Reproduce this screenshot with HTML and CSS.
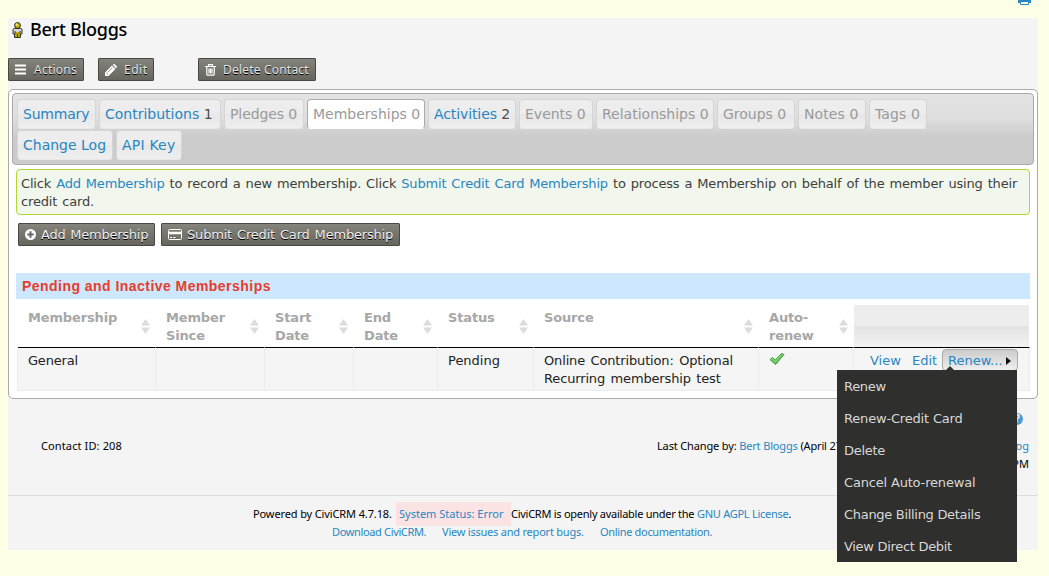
FILE: index.html
```html
<!DOCTYPE html>
<html lang="en">
<head>
<meta charset="utf-8">
<title>Bert Bloggs</title>
<link rel="stylesheet" href="styles.css">
</head>
<body>
<svg class="print" viewBox="0 0 13 12" width="13" height="12"><path d="M1 3h11a1 1 0 0 1 1 1v6H0V4a1 1 0 0 1 1-1z" fill="#2786c2"/><path d="M2.500 8.500h8v3h-8z" fill="#ffffe8" stroke="#2786c2"/></svg>
<main class="page">
  <h1 class="title">
    <svg width="11" height="16" viewBox="0 0 11 16"><circle cx="5.500" cy="3.500" r="2.900" fill="#c8b900" stroke="#222" /><path d="M2.500 6.500h6q1.500 0 1.500 1.500v4H8.500v3.500h-6V12H1V8q0-1.500 1.500-1.500z" fill="#d8d8d8" stroke="#333"/><path d="M3 10h5v5H3z" fill="#b8a900"/><path d="M3 9v3M8 9v3M5.500 12v3.500" stroke="#333"/><circle cx="4.700" cy="2.600" r="1" fill="#fff799"/></svg>
    <span>Bert Bloggs</span>
  </h1>
  <div class="actions">
    <a class="btn b-actions"><svg width="12" height="11" viewBox="0 0 12 11"><path d="M0 1.500h11M0 5.500h11M0 9.500h11" stroke="#fff" stroke-width="2"/></svg><span>Actions</span></a>
    <a class="btn b-edit"><svg width="12" height="12" viewBox="0 0 12 12"><path d="M0 12V8.500L7 1.500 10.500 5 3.500 12zM7.700.8l.8-.6q.6-.4 1.200 0l2.100 2.100q.4.600 0 1.200l-.7.700z" fill="#fff"/><path d="M2.500 8.500l5-5M1.200 9l1.800 1.800" stroke="#777" stroke-width=".7"/></svg><span>Edit</span></a>
    <a class="btn b-delete"><svg width="11" height="12" viewBox="0 0 11 12"><path d="M0 2.500h11M3.500 2V.7h4V2M1.800 3v7.200q0 1 1 1h5.400q1 0 1-1V3M4 4.500v5M5.500 4.500v5M7 4.500v5" fill="none" stroke="#fff" stroke-width="1.200"/></svg><span>Delete Contact</span></a>
  </div>
  <section class="panel">
    <nav class="tabs">
      <a class="tab t1">Summary</a>
      <a class="tab t2">Contributions <em>1</em></a>
      <a class="tab t3 off">Pledges 0</a>
      <a class="tab t4 off active">Memberships 0</a>
      <a class="tab t5">Activities <em>2</em></a>
      <a class="tab t6 off">Events 0</a>
      <a class="tab t7 off">Relationships 0</a>
      <a class="tab t8 off">Groups 0</a>
      <a class="tab t9 off">Notes 0</a>
      <a class="tab t10 off">Tags 0</a>
      <a class="tab t11">Change Log</a>
      <a class="tab t12">API Key</a>
    </nav>
    <p class="help">Click <a>Add Membership</a> to record a new membership. Click <a>Submit Credit Card Membership</a> to process a Membership on behalf of the member using their<br>credit card.</p>
    <div class="record">
      <a class="btn b-add"><svg width="11" height="11" viewBox="0 0 11 11"><circle cx="5.500" cy="5.500" r="5.500" fill="#fff"/><path d="M5.500 2.300v6.400M2.300 5.500h6.400" stroke="#666" stroke-width="2"/></svg><span>Add Membership</span></a>
      <a class="btn b-card"><svg width="14" height="11" viewBox="0 0 14 11"><rect x=".5" y=".5" width="13" height="10" rx="1" fill="none" stroke="#fff"/><path d="M0 4h14" stroke="#fff" stroke-width="2.500"/><path d="M2 8.500h2M5 8.500h2.500" stroke="#fff"/></svg><span>Submit Credit Card Membership</span></a>
    </div>
    <h2 class="section">Pending and Inactive Memberships</h2>
    <table class="grid">
      <colgroup><col class="c1"><col class="c2"><col class="c3"><col class="c4"><col class="c5"><col class="c6"><col class="c7"><col class="c8"></colgroup>
      <thead><tr>
        <th><div><span>Membership</span><i></i></div></th>
        <th><div><span>Member<br>Since</span><i></i></div></th>
        <th><div><span>Start<br>Date</span><i></i></div></th>
        <th><div><span>End<br>Date</span><i></i></div></th>
        <th><div><span>Status</span><i></i></div></th>
        <th><div><span>Source</span><i></i></div></th>
        <th><div><span>Auto-<br>renew</span><i></i></div></th>
        <th class="blank"></th>
      </tr></thead>
      <tbody><tr>
        <td class="tight">General</td><td></td><td></td><td></td><td>Pending</td>
        <td class="source">Online Contribution: Optional<br>Recurring membership test</td>
        <td><svg class="check" width="16" height="14" viewBox="0 0 16 14"><path d="M1 7.500l2.500-2 2.700 2.700L12.500 1.500l2.500 1-8.500 10z" fill="#5fc854" stroke="#419a3b" stroke-linejoin="round"/><path d="M2.500 7.500l1-.7 2.700 2.900 6.700-7" fill="none" stroke="#9be391"/></svg></td>
        <td class="ops"><div><a class="view">View</a><a class="edit">Edit</a><a class="more"><span>Renew...</span><b></b></a>
          <ul class="menu"><li>Renew</li><li>Renew-Credit Card</li><li>Delete</li><li>Cancel Auto-renewal</li><li>Change Billing Details</li><li>View Direct Debit</li></ul></div></td>
      </tr></tbody>
    </table>
  </section>
  <div class="meta">
    <span class="help-icon">?</span>
    <span class="cid">Contact ID: 208</span>
    <div class="change">
      <div class="line"><span>Last Change by: <a>Bert Bloggs</a> (April 27,</span><a>Change Log</a></div>
      <div class="line end">12:00 PM</div>
    </div>
  </div>
  <footer class="footer">
    <div class="powered"><span class="version">Powered by CiviCRM 4.7.18.</span><a class="status">System Status: Error</a><span class="license">CiviCRM is openly available under the <a>GNU AGPL License</a>.</span></div>
    <div class="links"><a class="download">Download CiviCRM.</a><a class="issues">View issues and report bugs.</a><a class="docs">Online documentation.</a></div>
  </footer>
</main>
</body>
</html>
```
FILE: styles.css
```css
* { box-sizing: border-box; }
body { margin: 0; height: 576px; overflow: hidden; background: #ffffe8; padding: 18px 11px 0 8px; position: relative; font: 13px/18px "DejaVu Sans", sans-serif; color: #3e3e3e; }
a { color: #2786c2; }
svg { flex: none; }
.print { position: absolute; left: 1018px; top: -7px; }
.page { height: 532px; background: #f4f4f4; }
.title { margin: 0; height: 40px; padding: 0 0 0 4px; display: flex; gap: 7px; font: 500 18px/23px "Noto Sans", sans-serif; letter-spacing: -.27px; color: #000; }
.title svg { margin-top: 4px; }
.actions { display: flex; height: 31px; font-family: "Noto Sans", sans-serif; font-size: 12px; }
.btn { display: flex; align-items: center; height: 23px; border: 1px solid #484844; background: linear-gradient(#84847c, #66665f); color: #f0f0f0; text-shadow: 0 1px 0 #000; padding: 0 6px; gap: 5px; border-radius: 1px; white-space: nowrap; }
.actions .btn { gap: 7px; color: #e6e6e6; }
.b-actions { width: 76px; margin-right: 14px; letter-spacing: .25px; }
.b-edit { width: 56px; margin-right: 44px; letter-spacing: .5px; }
.b-delete { width: 118px; letter-spacing: .2px; }
.panel { height: 310px; background: #fff; border: 1px solid #aaa; border-radius: 5px; padding: 3px; }
.tabs { height: 72px; border: 1px solid #aaa; border-radius: 4px; background: linear-gradient(#e3e3e3 0, #dedede 35%, #cbcbcb 62%, #cbcbcb 100%); padding: 5px 50px 0 4px; display: flex; flex-wrap: wrap; align-content: flex-start; gap: 1px 3px; font-size: 14px; }
.tab { height: 30px; border: 1px solid #d5d5d5; border-bottom-color: #e8e8e8; border-radius: 4px; background: linear-gradient(#ededed 50%, #e7e7e7 50%, #efefef); padding: 5px 0 0 5px; white-space: nowrap; }
.tab em { font-style: normal; color: #4e4e4e; }
.tab.off { color: #9a9a9a; }
.tab.active { background: #fff; border-color: #aaa; border-bottom-color: #fff; }
.t1 { width: 79px; letter-spacing: -.2px; } .t2 { width: 122px; } .t3 { width: 80px; letter-spacing: -.1px; } .t4 { width: 118px; } .t5 { width: 88px; letter-spacing: -.1px; } .t6 { width: 74px; }
.t7 { width: 118px; } .t8 { width: 78px; } .t9 { width: 68px; letter-spacing: .1px; } .t10 { width: 58px; letter-spacing: .1px; } .t11 { width: 96px; } .t12 { width: 66px; letter-spacing: .2px; }
.help { margin: 4px 4px 8px; height: 46px; border: 1px solid #b2d732; border-radius: 4px; background: #f1f7ec; padding: 5px 4px; white-space: nowrap; letter-spacing: -.16px; word-spacing: 1px; }
.record { display: flex; gap: 6px; padding-left: 6px; margin-bottom: 27px; }
.b-add { width: 137px; letter-spacing: -.25px; word-spacing: 1px; } .b-card { width: 239px; letter-spacing: -.18px; word-spacing: 1px; }
.section { margin: 0 4px 6px; height: 26px; padding-left: 6px; background: #cde8fe; color: #e43d2b; font: bold 14px/26px "Liberation Sans", sans-serif; letter-spacing: .46px; }
.grid { margin-left: 6px; width: 1012px; table-layout: fixed; border-collapse: separate; border-spacing: 0; }
.c1 { width: 138px; } .c2 { width: 109px; } .c3 { width: 89px; } .c4 { width: 84px; } .c5 { width: 96px; } .c6 { width: 225px; } .c7 { width: 95px; } .c8 { width: 176px; }
.grid th { height: 43px; padding: 4px 5px 0 10px; text-align: left; vertical-align: top; color: #a7a7a7; border-bottom: 1px solid #000; border-right: 1px solid #fff; letter-spacing: -.15px; }
.grid th div { display: flex; justify-content: space-between; }
.grid th i { width: 9px; height: 15px; margin-top: 10px; background: #dcdcdc; clip-path: polygon(50% 0, 100% 44%, 0 44%, 0 56%, 100% 56%, 50% 100%, 0 56%, 0 44%); }
.grid .blank { background: linear-gradient(#ededed 50%, #e3e3e3 50%, #f2f2f2); }
.grid td { height: 43px; padding: 4px 0 0 10px; vertical-align: top; background: #f5f5f5; border-right: 1px solid #ececec; border-bottom: 1px solid #ececec; color: #222; white-space: nowrap; }
.grid td:first-child { box-shadow: -1px 0 #ececec; }
.grid .tight { letter-spacing: -.2px; }
.grid .source { letter-spacing: -.15px; word-spacing: 1.500px; }
.check { display: block; }
.grid .ops { padding: 1px 0 0 16px; }
.ops > div { position: relative; display: flex; align-items: center; height: 22px; }
.view, .edit { padding-top: 2px; }
.view { width: 42px; }
.edit { width: 30px; }
.more { width: 76px; height: 22px; border: 1px solid #aaa; border-radius: 4px; background: linear-gradient(#ccc, #eee); display: flex; align-items: center; gap: 3px; padding: 2px 0 0 5px; }
.more b { border: 4px solid transparent; border-left: 5px solid #111; border-right: 0; }
.menu { position: absolute; z-index: 5; left: -33px; top: 21px; width: 180px; height: 192px; margin: 0; padding: 0; list-style: none; background: #2f2f2d; color: #d8d8d8; line-height: 32px; letter-spacing: -.3px; }
.menu::before { content: ""; position: absolute; left: 109px; top: -4px; border: 4px solid transparent; border-top: 0; border-bottom-color: #2f2f2d; }
.menu li { height: 32px; padding: 1px 0 0 7px; }
.menu li:nth-child(2), .menu li:nth-child(4) { letter-spacing: -.18px; }
.meta { position: relative; height: 97px; padding: 38px 9px 0 33px; display: flex; justify-content: space-between; border-bottom: 1px solid #ddd; font: 11px/18px "Noto Sans", sans-serif; color: #000; }
.cid { letter-spacing: .12px; }
.change { width: 372px; white-space: nowrap; }
.change span { letter-spacing: -.15px; }
.line { display: flex; justify-content: space-between; }
.end { justify-content: flex-end; }
.help-icon { position: absolute; right: 15px; top: 14px; width: 12px; height: 12px; border-radius: 50%; background: #4d9bd1; color: #fff; font: bold 10px/12px "Liberation Sans", sans-serif; text-align: center; }
.footer { padding-top: 6px; font: 11px/18px "Noto Sans", sans-serif; color: #000; white-space: nowrap; }
.powered { display: flex; padding-left: 245px; line-height: 24px; }
.version { width: 143px; letter-spacing: -.12px; }
.status { height: 24px; width: 115px; padding-left: 3px; background: #fbe3e4; }
.license { letter-spacing: -.26px; }
.links { display: flex; padding-left: 324px; line-height: 12px; }
.download { width: 110px; letter-spacing: -.35px; }
.issues { width: 158px; letter-spacing: -.22px; }
.docs { letter-spacing: -.33px; }
```
